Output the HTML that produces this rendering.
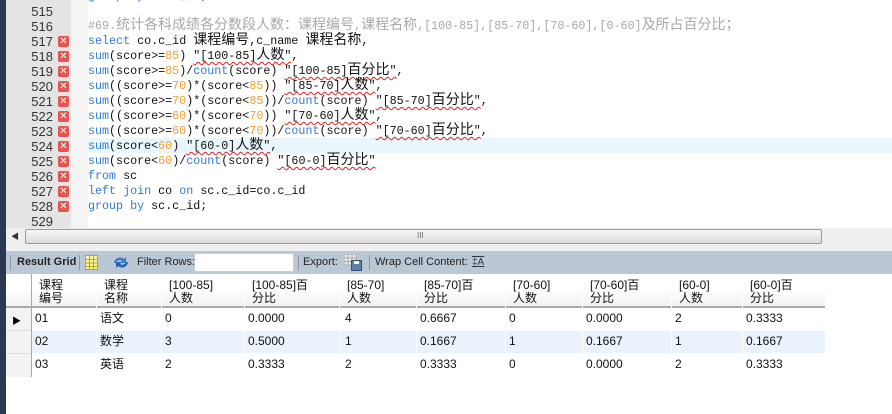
<!DOCTYPE html>
<html><head><meta charset="utf-8"><style>
*{margin:0;padding:0;box-sizing:border-box}
body{width:892px;height:414px;overflow:hidden;background:#fff;position:relative;font-family:"Liberation Sans","Noto Sans CJK SC",sans-serif}
.a{position:absolute}
.code{font-family:"Liberation Mono","Noto Sans CJK SC",monospace;font-size:11.7px;white-space:pre;color:#111}
.ln{position:absolute;left:6px;width:47px;text-align:right;font-family:"Liberation Sans",sans-serif;font-size:13px;color:#333;height:15px;line-height:15px}
.cl{position:absolute;left:88px;height:15px;line-height:15px}
.k{color:#2f7bd0}.n{color:#f3a030}.c{color:#a8a8a8}
.s{text-decoration:underline wavy #e02020;text-decoration-thickness:1px;text-underline-offset:2px}
.z{font-size:14px}
.x{position:absolute;left:58px;width:11px;height:11px;background:#e25555;border-radius:2px;color:#fff;font-size:10px;line-height:11px;text-align:center;font-weight:bold;font-family:"DejaVu Sans",sans-serif}
.tb{font-size:11px;color:#222;top:251px;height:23px;line-height:23px;white-space:nowrap}
.sep{position:absolute;top:255px;width:1px;height:15px;background:#8d99aa}
.h{position:absolute;top:279px;font-size:12px;line-height:13px;color:#111;white-space:nowrap}
.d{position:absolute;font-size:12px;color:#111;line-height:14px;white-space:nowrap}
.vl{position:absolute;top:274px;width:1px;height:103px;background:#fff}
</style></head><body>
<div class="a" style="left:0;top:0;width:6px;height:414px;background:#2a3850"></div>
<div class="a" style="left:6px;top:0;width:65px;height:228px;background:#e4e4e4"></div>
<div class="a" style="left:71px;top:0;width:17px;height:228px;background:#f4f4f4"></div>
<div class="a" style="left:88px;top:138px;width:804px;height:15px;background:#e9f7fd"></div>
<div class="code">
<div class="cl" style="top:-11px"><span class="k">group by</span> sc.c_id;</div>
<div class="ln" style="top:4px">515</div>
<div class="ln" style="top:19px">516</div><div class="cl c" style="top:19px">#69.<span class="z">统计各科成绩各分数段人数：课程编号</span>,<span class="z">课程名称</span>,[100-85],[85-70],[70-60],[0-60]<span class="z">及所占百分比；</span></div>
<div class="ln" style="top:34px">517</div><div class="x" style="top:36px">✕</div><div class="cl" style="top:34px"><span class="k">select</span> co.c_id <span class="z">课程编号</span>,c_name <span class="z">课程名称</span>,</div>
<div class="ln" style="top:49px">518</div><div class="x" style="top:51px">✕</div><div class="cl" style="top:49px"><span class="k">sum</span>(score&gt;=<span class="n">85</span>) <span class="s">"[100-85]<span class="z">人数</span>"</span>,</div>
<div class="ln" style="top:64px">519</div><div class="x" style="top:66px">✕</div><div class="cl" style="top:64px"><span class="k">sum</span>(score&gt;=<span class="n">85</span>)/<span class="k">count</span>(score) <span class="s">"[100-85]<span class="z">百分比</span>"</span>,</div>
<div class="ln" style="top:79px">520</div><div class="x" style="top:81px">✕</div><div class="cl" style="top:79px"><span class="k">sum</span>((score&gt;=<span class="n">70</span>)*(score&lt;<span class="n">85</span>)) <span class="s">"[85-70]<span class="z">人数</span>"</span>,</div>
<div class="ln" style="top:94px">521</div><div class="x" style="top:96px">✕</div><div class="cl" style="top:94px"><span class="k">sum</span>((score&gt;=<span class="n">70</span>)*(score&lt;<span class="n">85</span>))/<span class="k">count</span>(score) <span class="s">"[85-70]<span class="z">百分比</span>"</span>,</div>
<div class="ln" style="top:109px">522</div><div class="x" style="top:111px">✕</div><div class="cl" style="top:109px"><span class="k">sum</span>((score&gt;=<span class="n">60</span>)*(score&lt;<span class="n">70</span>)) <span class="s">"[70-60]<span class="z">人数</span>"</span>,</div>
<div class="ln" style="top:124px">523</div><div class="x" style="top:126px">✕</div><div class="cl" style="top:124px"><span class="k">sum</span>((score&gt;=<span class="n">60</span>)*(score&lt;<span class="n">70</span>))/<span class="k">count</span>(score) <span class="s">"[70-60]<span class="z">百分比</span>"</span>,</div>
<div class="ln" style="top:139px">524</div><div class="x" style="top:141px">✕</div><div class="cl" style="top:139px"><span class="k">sum</span>(score&lt;<span class="n">60</span>) <span class="s">"[60-0]<span class="z">人数</span>"</span>,</div>
<div class="ln" style="top:154px">525</div><div class="x" style="top:156px">✕</div><div class="cl" style="top:154px"><span class="k">sum</span>(score&lt;<span class="n">60</span>)/<span class="k">count</span>(score) <span class="s">"[60-0]<span class="z">百分比</span>"</span></div>
<div class="ln" style="top:169px">526</div><div class="x" style="top:171px">✕</div><div class="cl" style="top:169px"><span class="k">from</span> sc</div>
<div class="ln" style="top:184px">527</div><div class="x" style="top:186px">✕</div><div class="cl" style="top:184px"><span class="k">left join</span> co <span class="k">on</span> sc.c_id=co.c_id</div>
<div class="ln" style="top:199px">528</div><div class="x" style="top:201px">✕</div><div class="cl" style="top:199px"><span class="k">group by</span> sc.c_id;</div>
<div class="ln" style="top:214px">529</div>
</div>
<div class="a" style="left:6px;top:228px;width:886px;height:23px;background:#efefef"></div>
<div class="a" style="left:6px;top:229px;width:18px;height:15px;font-size:8px;color:#333;line-height:15px;text-align:center">◀</div>
<div class="a" style="left:25px;top:229px;width:797px;height:15px;border:1px solid #9a9a9a;border-radius:2px;background:linear-gradient(#f6f6f6,#dcdcdc)"></div>
<div class="a" style="left:417px;top:231px;font-size:8px;color:#666">III</div>
<div class="a" style="left:6px;top:251px;width:886px;height:23px;background:#bcc7d6"></div>
<div class="sep" style="left:10px"></div>
<div class="a tb" style="left:17px;font-weight:bold">Result Grid</div>
<div class="sep" style="left:79px"></div>
<svg class="a" style="left:85px;top:255px" width="13" height="15"><rect x="0.5" y="0.5" width="12" height="14" fill="#fff6a0" stroke="#c9a21a"/><path d="M4.5 1v13M8.5 1v13M1 4.5h11M1 8h11M1 11.5h11" stroke="#c9a21a"/></svg>
<svg class="a" style="left:112px;top:255px" width="18" height="15"><path d="M2 8a6 6 0 0 1 10-4l2-2v6h-6l2-2a4 4 0 0 0-6 2z" fill="#3c7fd0"/><path d="M16 7a6 6 0 0 1-10 4l-2 2V7h6l-2 2a4 4 0 0 0 6-2z" fill="#2a64b0"/></svg>
<div class="a tb" style="left:137px">Filter Rows:</div>
<div class="a" style="left:194px;top:253px;width:100px;height:19px;background:#fff;border:1px solid #c8ced8"></div>
<div class="sep" style="left:298px"></div>
<div class="a tb" style="left:303px">Export:</div>
<svg class="a" style="left:344px;top:254px" width="19" height="17"><rect x="0" y="0" width="12" height="11" fill="#e8e8e8" stroke="#aaa"/><path d="M4 0v11M8 0v11M0 4h12M0 7.5h12" stroke="#aaa"/><rect x="7.5" y="6.5" width="10" height="10" fill="#5b7fa8" stroke="#34506f"/><rect x="10" y="7" width="5" height="3" fill="#fff"/></svg>
<div class="sep" style="left:369px"></div>
<div class="a tb" style="left:375px">Wrap Cell Content:</div>
<div class="a" style="left:472px;top:257px;font-size:10px;color:#334;text-decoration:underline overline">‡A</div>
<div class="a" style="left:6px;top:274px;width:819px;height:34px;background:linear-gradient(#fff 0,#fff 40%,#f3f3f3 100%);border-bottom:2px solid #a9a9a9"></div>
<div class="a" style="left:6px;top:308px;width:25px;height:69px;background:#f3f3f3"></div>
<div class="a" style="left:31px;top:274px;width:1px;height:103px;background:#a9a9a9"></div>
<div class="a" style="left:6px;top:330px;width:25px;height:1px;background:#ddd"></div>
<div class="a" style="left:6px;top:353px;width:25px;height:1px;background:#ddd"></div>
<div class="a" style="left:32px;top:331px;width:793px;height:22px;background:#eaf2fb"></div>
<div class="vl" style="left:96px"></div><div class="vl" style="left:161px"></div><div class="vl" style="left:244px"></div><div class="vl" style="left:339px"></div><div class="vl" style="left:416px"></div><div class="vl" style="left:505px"></div><div class="vl" style="left:582px"></div><div class="vl" style="left:671px"></div><div class="vl" style="left:742px"></div>
<div class="a" style="left:12px;top:314px;font-size:9px">▶</div>
<div class="h" style="left:39px">课程<br>编号</div>
<div class="h" style="left:104px">课程<br>名称</div>
<div class="h" style="left:169px">[100-85]<br>人数</div>
<div class="h" style="left:252px">[100-85]百<br>分比</div>
<div class="h" style="left:347px">[85-70]<br>人数</div>
<div class="h" style="left:424px">[85-70]百<br>分比</div>
<div class="h" style="left:513px">[70-60]<br>人数</div>
<div class="h" style="left:590px">[70-60]百<br>分比</div>
<div class="h" style="left:679px">[60-0]<br>人数</div>
<div class="h" style="left:750px">[60-0]百<br>分比</div>
<div style="position:absolute;top:311px;left:0">
<div class="d" style="left:35px">01</div><div class="d" style="left:100px">语文</div><div class="d" style="left:165px">0</div><div class="d" style="left:248px">0.0000</div><div class="d" style="left:345px">4</div><div class="d" style="left:420px">0.6667</div><div class="d" style="left:509px">0</div><div class="d" style="left:586px">0.0000</div><div class="d" style="left:675px">2</div><div class="d" style="left:746px">0.3333</div>
</div>
<div style="position:absolute;top:334px;left:0">
<div class="d" style="left:35px">02</div><div class="d" style="left:100px">数学</div><div class="d" style="left:165px">3</div><div class="d" style="left:248px">0.5000</div><div class="d" style="left:345px">1</div><div class="d" style="left:420px">0.1667</div><div class="d" style="left:509px">1</div><div class="d" style="left:586px">0.1667</div><div class="d" style="left:675px">1</div><div class="d" style="left:746px">0.1667</div>
</div>
<div style="position:absolute;top:357px;left:0">
<div class="d" style="left:35px">03</div><div class="d" style="left:100px">英语</div><div class="d" style="left:165px">2</div><div class="d" style="left:248px">0.3333</div><div class="d" style="left:345px">2</div><div class="d" style="left:420px">0.3333</div><div class="d" style="left:509px">0</div><div class="d" style="left:586px">0.0000</div><div class="d" style="left:675px">2</div><div class="d" style="left:746px">0.3333</div>
</div>
</body></html>
